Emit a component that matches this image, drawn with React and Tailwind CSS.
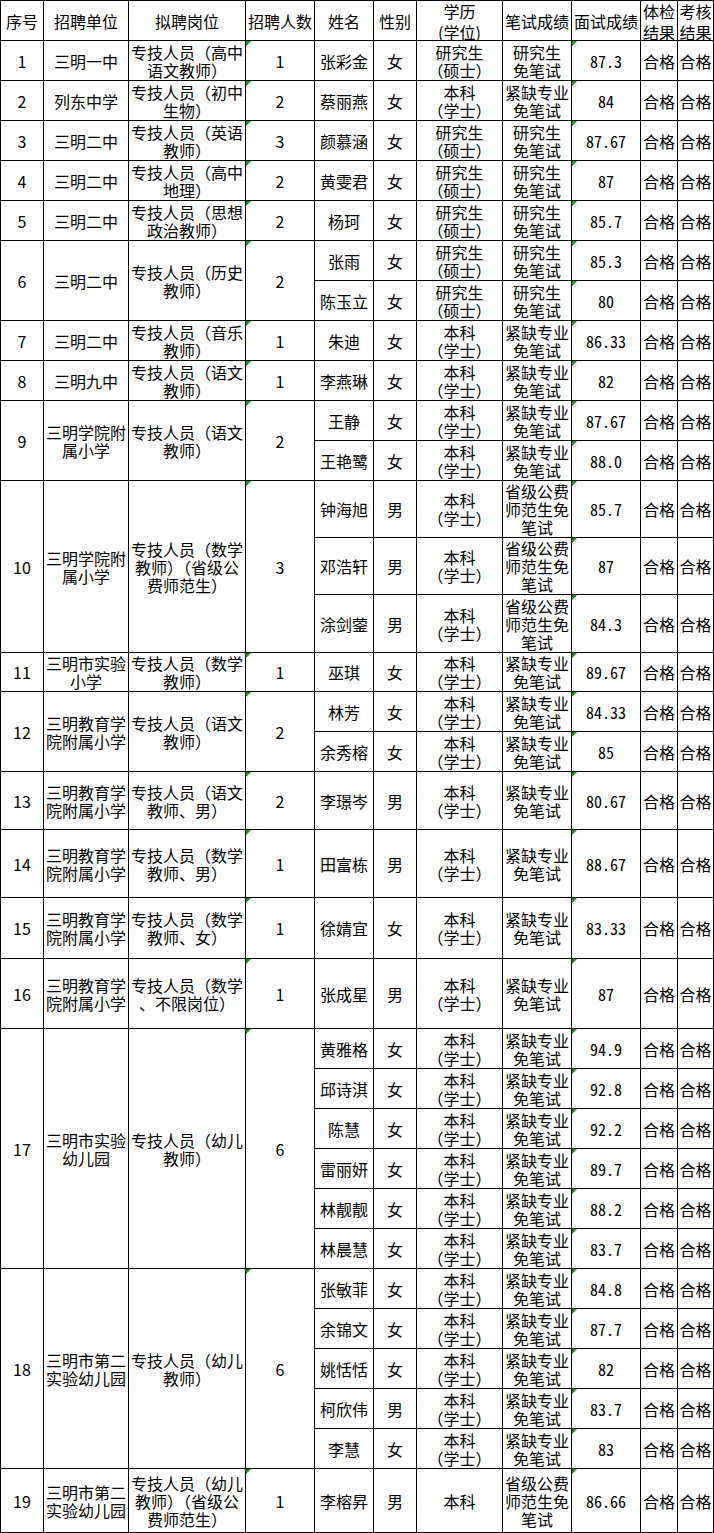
import React from 'react';
import clsx from 'clsx';

// column widths (each includes its right border)
const W = {
  no: 'w-[43px]',
  unit: 'w-[85px]',
  post: 'w-[117px]',
  cnt: 'w-[69px]',
  name: 'w-[59px]',
  sex: 'w-[43px]',
  edu: 'w-[86px]',
  written: 'w-[69px]',
  score: 'w-[69px]',
  check: 'w-[37px]',
  assess: 'w-[36px]',
};

const SS = ['研究生', '（硕士）'];
const BK = ['本科', '（学士）'];
const YJ = ['研究生', '免笔试'];
const JQ = ['紧缺专业', '免笔试'];
const SJ = ['省级公费', '师范生免', '笔试'];

const p = (name, sex, edu, written, score, h = 'h-[40px]') => ({ name, sex, edu, written, score, h });

const groups = [
  { no: '1', unit: ['三明一中'], post: ['专技人员（高中', '语文教师）'], cnt: '1', people: [p('张彩金', '女', SS, YJ, '87.3')] },
  { no: '2', unit: ['列东中学'], post: ['专技人员（初中', '生物）'], cnt: '2', people: [p('蔡丽燕', '女', BK, JQ, '84')] },
  { no: '3', unit: ['三明二中'], post: ['专技人员（英语', '教师）'], cnt: '3', people: [p('颜慕涵', '女', SS, YJ, '87.67')] },
  { no: '4', unit: ['三明二中'], post: ['专技人员（高中', '地理）'], cnt: '2', people: [p('黄雯君', '女', SS, YJ, '87')] },
  { no: '5', unit: ['三明二中'], post: ['专技人员（思想', '政治教师）'], cnt: '2', people: [p('杨珂', '女', SS, YJ, '85.7')] },
  {
    no: '6', unit: ['三明二中'], post: ['专技人员（历史', '教师）'], cnt: '2',
    people: [p('张雨', '女', SS, YJ, '85.3'), p('陈玉立', '女', SS, YJ, '80')],
  },
  { no: '7', unit: ['三明二中'], post: ['专技人员（音乐', '教师）'], cnt: '1', people: [p('朱迪', '女', BK, JQ, '86.33')] },
  { no: '8', unit: ['三明九中'], post: ['专技人员（语文', '教师）'], cnt: '1', people: [p('李燕琳', '女', BK, JQ, '82')] },
  {
    no: '9', unit: ['三明学院附', '属小学'], post: ['专技人员（语文', '教师）'], cnt: '2',
    people: [p('王静', '女', BK, JQ, '87.67'), p('王艳鹭', '女', BK, JQ, '88.0')],
  },
  {
    no: '10', unit: ['三明学院附', '属小学'], post: ['专技人员（数学', '教师）（省级公', '费师范生）'], cnt: '3',
    people: [
      p('钟海旭', '男', BK, SJ, '85.7', 'h-[57px]'),
      p('邓浩轩', '男', BK, SJ, '87', 'h-[57px]'),
      p('涂剑蓥', '男', BK, SJ, '84.3', 'h-[58px]'),
    ],
  },
  { no: '11', unit: ['三明市实验', '小学'], post: ['专技人员（数学', '教师）'], cnt: '1', people: [p('巫琪', '女', BK, JQ, '89.67', 'h-[39px]')] },
  {
    no: '12', unit: ['三明教育学', '院附属小学'], post: ['专技人员（语文', '教师）'], cnt: '2',
    people: [p('林芳', '女', BK, JQ, '84.33'), p('余秀榕', '女', BK, JQ, '85')],
  },
  { no: '13', unit: ['三明教育学', '院附属小学'], post: ['专技人员（语文', '教师、男）'], cnt: '2', people: [p('李璟岑', '男', BK, JQ, '80.67', 'h-[58px]')] },
  { no: '14', unit: ['三明教育学', '院附属小学'], post: ['专技人员（数学', '教师、男）'], cnt: '1', people: [p('田富栋', '男', BK, JQ, '88.67', 'h-[68px]')] },
  { no: '15', unit: ['三明教育学', '院附属小学'], post: ['专技人员（数学', '教师、女）'], cnt: '1', people: [p('徐婧宜', '女', BK, JQ, '83.33', 'h-[61px]')] },
  { no: '16', unit: ['三明教育学', '院附属小学'], post: ['专技人员（数学', '、不限岗位）'], cnt: '1', people: [p('张成星', '男', BK, JQ, '87', 'h-[70px]')] },
  {
    no: '17', unit: ['三明市实验', '幼儿园'], post: ['专技人员（幼儿', '教师）'], cnt: '6',
    people: [
      p('黄雅格', '女', BK, JQ, '94.9'),
      p('邱诗淇', '女', BK, JQ, '92.8'),
      p('陈慧', '女', BK, JQ, '92.2'),
      p('雷丽妍', '女', BK, JQ, '89.7'),
      p('林靓靓', '女', BK, JQ, '88.2'),
      p('林晨慧', '女', BK, JQ, '83.7'),
    ],
  },
  {
    no: '18', unit: ['三明市第二', '实验幼儿园'], post: ['专技人员（幼儿', '教师）'], cnt: '6',
    people: [
      p('张敏菲', '女', BK, JQ, '84.8'),
      p('余锦文', '女', BK, JQ, '87.7'),
      p('姚恬恬', '女', BK, JQ, '82'),
      p('柯欣伟', '男', BK, JQ, '83.7'),
      p('李慧', '女', BK, JQ, '83'),
    ],
  },
  {
    no: '19', unit: ['三明市第二', '实验幼儿园'], post: ['专技人员（幼儿', '教师）（省级公', '费师范生）'], cnt: '1',
    people: [p('李榕昇', '男', ['本科'], SJ, '86.66', 'h-[64px]')],
  },
];

const Cell = ({ w, lines, mark, top, className }) => (
  <div
    className={clsx(
      'relative flex justify-center text-center border-r border-b border-black overflow-hidden shrink-0',
      top ? 'items-start leading-[21px]' : 'items-center leading-[18px]',
      w,
      className
    )}
  >
    {mark && (
      <span className="absolute left-0 top-0 w-[5px] h-[5px] bg-[#009a00] [clip-path:polygon(0_0,100%_0,0_100%)]" />
    )}
    <div>
      {(Array.isArray(lines) ? lines : [lines]).map((l, i) => (
        <div key={i} className="whitespace-nowrap">{l}</div>
      ))}
    </div>
  </div>
);

export default function App() {
  return (
    <div className="w-[714px] bg-white text-black text-base font-['Noto_Sans_CJK_SC',sans-serif]">
      <div className="border-l border-t border-black">
        {/* header */}
        <div className="flex h-[40px]">
          <Cell w={W.no} lines="序号" />
          <Cell w={W.unit} lines="招聘单位" />
          <Cell w={W.post} lines="拟聘岗位" />
          <Cell w={W.cnt} lines="招聘人数" />
          <Cell w={W.name} lines="姓名" />
          <Cell w={W.sex} lines="性别" />
          <Cell w={W.edu} lines={['学历', '(学位)']} top />
          <Cell w={W.written} lines="笔试成绩" />
          <Cell w={W.score} lines="面试成绩" />
          <Cell w={W.check} lines={['体检', '结果']} top />
          <Cell w={W.assess} lines={['考核', '结果']} top />
        </div>

        {groups.map((g) => (
          <div key={g.no} className="flex">
            <Cell w={W.no} lines={g.no} />
            <Cell w={W.unit} lines={g.unit} />
            <Cell w={W.post} lines={g.post} />
            <Cell w={W.cnt} lines={g.cnt} mark />
            <div className="flex flex-col">
              {g.people.map((m) => (
                <div key={m.name} className={clsx('flex', m.h)}>
                  <Cell w={W.name} lines={m.name} />
                  <Cell w={W.sex} lines={m.sex} />
                  <Cell w={W.edu} lines={m.edu} />
                  <Cell w={W.written} lines={m.written} />
                  <Cell
                    w={W.score}
                    lines={m.score}
                    mark
                    className="font-['Noto_Sans_Mono_CJK_SC','Liberation_Mono',monospace]"
                  />
                  <Cell w={W.check} lines="合格" />
                  <Cell w={W.assess} lines="合格" />
                </div>
              ))}
            </div>
          </div>
        ))}
      </div>
    </div>
  );
}
